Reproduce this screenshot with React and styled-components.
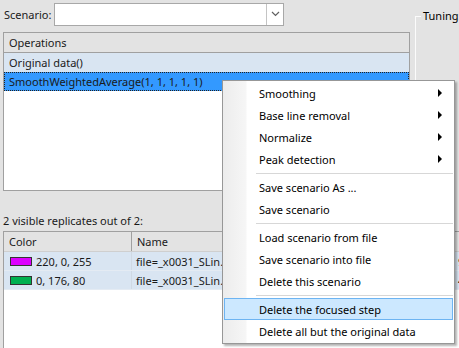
import React from "react";
import styled, { createGlobalStyle } from "styled-components";

const Global = createGlobalStyle`
  body {
    margin: 0;
    background: #e3e3e3;
  }
`;

const Root = styled.div`
  width: 459px;
  height: 348px;
  position: relative;
  overflow: hidden;
  background: #e3e3e3;
  font-family: "Noto Sans", "Open Sans", sans-serif;
  font-size: 11px;
  color: #1a1a1a;
`;

const TopArea = styled.div`
  display: flex;
  align-items: flex-start;
  padding-top: 2px;
`;

const LeftPane = styled.div`
  margin-left: 3px;
  width: 407px;
  display: flex;
  flex-direction: column;
`;

const ScenarioRow = styled.div`
  display: flex;
  align-items: center;
  height: 24px;
`;

const Label = styled.span`
  width: 51px;
  padding-left: 1px;
  box-sizing: border-box;
`;

const Combo = styled.div`
  width: 230px;
  height: 23px;
  box-sizing: border-box;
  border: 1px solid #a8a8a8;
  background: #fff;
  display: flex;
  justify-content: flex-end;
`;

const DropButton = styled.div`
  width: 16px;
  border-left: 1px solid #c4c4c4;
  display: flex;
  align-items: center;
  justify-content: center;
`;

const List = styled.div`
  margin-top: 6px;
  height: 159px;
  box-sizing: border-box;
  border: 1px solid #a0a0a0;
  background: #fff;
`;

const ListHeader = styled.div`
  height: 20px;
  box-sizing: border-box;
  border-bottom: 1px solid #a0a0a0;
  background: #e3e3e3;
  padding-left: 5px;
  display: flex;
  align-items: center;
`;

const ListRow = styled.div`
  height: 19px;
  padding-left: 5px;
  display: flex;
  align-items: center;
  background: ${(p) => (p.selected ? "#3399ff" : "#d9e5f2")};
  outline: ${(p) => (p.selected ? "1px dotted #222" : "none")};
  outline-offset: -1px;
`;

const GroupBox = styled.div`
  position: relative;
  margin: 14px 0 0 5px;
  flex: 1;
  height: 150px;
  border-top: 1px solid #fbfbfb;
  border-left: 1px solid #fbfbfb;
`;

const GroupTitle = styled.span`
  position: absolute;
  top: -9px;
  left: 5px;
  padding: 0 2px;
  background: #e3e3e3;
  color: #000;
  white-space: nowrap;
`;

const Status = styled.div`
  margin: 19px 0 0 3px;
  height: 20px;
  display: flex;
  align-items: center;
`;

const Grid = styled.div`
  margin: 1px 0 0 3px;
  width: 520px;
  height: 140px;
  border-left: 1px solid #a0a0a0;
  border-top: 1px solid #a0a0a0;
  background: #fff;
`;

const GridRow = styled.div`
  display: flex;
  height: ${(p) => (p.header ? "20px" : "19px")};
  box-sizing: border-box;
  background: ${(p) => (p.header ? "#e3e3e3" : "#d9e5f2")};
  border-bottom: 1px solid ${(p) => (p.header ? "#cfcfcf" : "#e4ebf3")};
`;

const Cell = styled.div`
  width: ${(p) => p.w}px;
  box-sizing: border-box;
  padding-left: ${(p) => (p.header ? 5 : 4)}px;
  border-right: 1px solid ${(p) => (p.header ? "#a0a0a0" : "#cfd9e4")};
  display: flex;
  align-items: center;
  gap: 4px;
  white-space: nowrap;
  overflow: hidden;
`;

const Swatch = styled.span`
  width: 22px;
  height: 9px;
  margin-left: 2px;
  box-sizing: border-box;
  border: 1px solid #333;
  background: ${(p) => p.color};
`;

const Menu = styled.div`
  position: absolute;
  left: 222px;
  top: 80px;
  width: 233px;
  box-sizing: border-box;
  padding: 1px;
  border: 1px solid #979797;
  background: linear-gradient(to right, #ececec 0, #f6f6f6 23px, #fff 24px);
  box-shadow: 2px 2px 2px rgba(0, 0, 0, 0.3);
  color: #000;
`;

const Item = styled.div`
  height: 22px;
  box-sizing: border-box;
  padding: 0 10px 0 34px;
  display: flex;
  align-items: center;
  justify-content: space-between;
  border: 1px solid ${(p) => (p.active ? "#6db4f2" : "transparent")};
  background: ${(p) => (p.active ? "#cce8ff" : "transparent")};
`;

const Arrow = styled.span`
  width: 0;
  height: 0;
  border-left: 4px solid #000;
  border-top: 4px solid transparent;
  border-bottom: 4px solid transparent;
`;

const Separator = styled.div`
  height: 6px;
  display: flex;
  align-items: center;
  padding-left: 32px;
  &::after {
    content: "";
    flex: 1;
    height: 1px;
    background: #d7d7d7;
  }
`;

const replicates = [
  { color: "rgb(220, 0, 255)", label: "220, 0, 255", extra: "9" },
  { color: "rgb(0, 176, 80)", label: "0, 176, 80", extra: "4" },
];

const menu = [
  { label: "Smoothing", sub: true },
  { label: "Base line removal", sub: true },
  { label: "Normalize", sub: true },
  { label: "Peak detection", sub: true },
  "-",
  { label: "Save scenario As ..." },
  { label: "Save scenario" },
  "-",
  { label: "Load scenario from file" },
  { label: "Save scenario into file" },
  { label: "Delete this scenario" },
  "-",
  { label: "Delete the focused step", active: true },
  { label: "Delete all but the original data" },
];

export default function App() {
  return (
    <Root>
      <Global />
      <TopArea>
        <LeftPane>
          <ScenarioRow>
            <Label>Scenario:</Label>
            <Combo>
              <DropButton>
                <svg width="9" height="6" viewBox="0 0 9 6">
                  <path d="M1 1 L4.5 4.5 L8 1" fill="none" stroke="#606060" strokeWidth="1.2" />
                </svg>
              </DropButton>
            </Combo>
          </ScenarioRow>
          <List>
            <ListHeader>Operations</ListHeader>
            <ListRow>Original data()</ListRow>
            <ListRow selected>SmoothWeightedAverage(1, 1, 1, 1, 1)</ListRow>
          </List>
        </LeftPane>
        <GroupBox>
          <GroupTitle>Tuning:</GroupTitle>
        </GroupBox>
      </TopArea>
      <Status>2 visible replicates out of 2:</Status>
      <Grid>
        <GridRow header>
          <Cell header w={128}>Color</Cell>
          <Cell header w={322}>Name</Cell>
          <Cell header w={60}>n</Cell>
        </GridRow>
        {replicates.map((r) => (
          <GridRow key={r.label}>
            <Cell w={128}>
              <Swatch color={r.color} />
              {r.label}
            </Cell>
            <Cell w={322}>file=_x0031_SLin.txt</Cell>
            <Cell w={60}>{r.extra}</Cell>
          </GridRow>
        ))}
      </Grid>
      <Menu>
        {menu.map((m, i) =>
          m === "-" ? (
            <Separator key={i} />
          ) : (
            <Item key={i} active={m.active}>
              <span>{m.label}</span>
              {m.sub && <Arrow />}
            </Item>
          )
        )}
      </Menu>
    </Root>
  );
}
